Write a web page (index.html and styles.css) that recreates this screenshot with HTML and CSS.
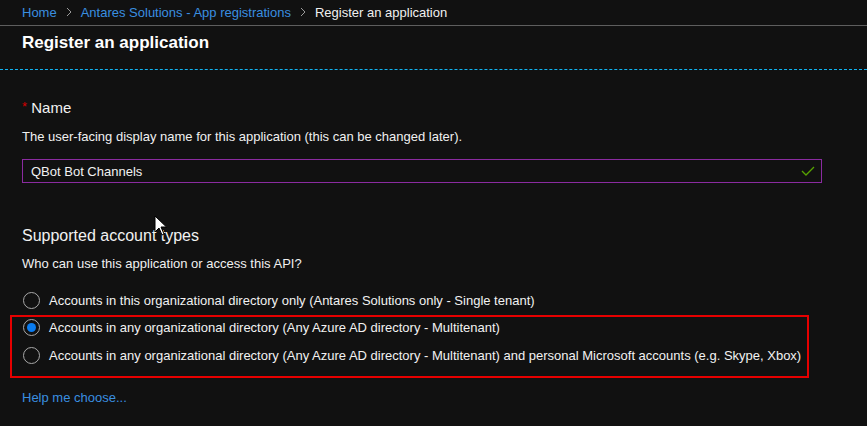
FILE: index.html
```html
<!DOCTYPE html>
<html>
<head>
<meta charset="utf-8">
<link rel="stylesheet" href="styles.css">
</head>
<body>
<div class="page">
  <nav class="crumbs">
    <a class="link">Home</a>
    <span class="chev"><svg width="8" height="10" viewBox="0 0 8 10"><path d="M2 1 L6 5 L2 9" fill="none" stroke="#9a9a9a" stroke-width="1"/></svg></span>
    <a class="link">Antares Solutions - App registrations</a>
    <span class="chev"><svg width="8" height="10" viewBox="0 0 8 10"><path d="M2 1 L6 5 L2 9" fill="none" stroke="#9a9a9a" stroke-width="1"/></svg></span>
    <span class="current">Register an application</span>
  </nav>
  <header class="titlebar">
    <h1 class="title">Register an application</h1>
  </header>
  <div class="dash"></div>
  <main class="content">
    <h2 class="label"><span class="req">*</span> Name</h2>
    <p class="desc">The user-facing display name for this application (this can be changed later).</p>
    <div class="input">
      <span class="value">QBot Bot Channels</span>
      <svg class="check" width="14" height="10" viewBox="0 0 14 10"><path d="M1 5 L5 9 L13 1" fill="none" stroke="#57a300" stroke-width="1.3"/></svg>
    </div>
    <h2 class="section">Supported account types</h2>
    <p class="desc q">Who can use this application or access this API?</p>
    <div class="radios">
      <div class="row"><span class="radio"></span><span>Accounts in this organizational directory only (Antares Solutions only - Single tenant)</span></div>
      <div class="hl">
        <div class="row"><span class="radio on"></span><span>Accounts in any organizational directory (Any Azure AD directory - Multitenant)</span></div>
        <div class="row"><span class="radio"></span><span>Accounts in any organizational directory (Any Azure AD directory - Multitenant) and personal Microsoft accounts (e.g. Skype, Xbox)</span></div>
      </div>
    </div>
    <a class="link help">Help me choose...</a>
  </main>
  <svg class="cursor" width="14" height="22" viewBox="0 0 14 22"><path d="M1 1 L1 17 L5 13 L8 20 L10 19 L7 12 L12.5 12 Z" fill="#fff" stroke="#000" stroke-width="1"/></svg>
</div>
</body>
</html>
```
FILE: styles.css
```css
* { box-sizing: border-box; }
html, body { margin: 0; padding: 0; background: #111111; }
body { font-family: "Liberation Sans", Arial, sans-serif; color: #f2f2f2; font-size: 13px; }
.page { position: relative; width: 867px; height: 426px; overflow: hidden; }
.crumbs { height: 26px; border-bottom: 1px solid #5e5e5e; display: flex; align-items: center; padding-left: 22px; gap: 8px; font-size: 13px; padding-bottom: 1px; }
.link { color: #3a8fe0; text-decoration: none; }
.chev { display: flex; align-items: center; }
.current { color: #f0f0f0; }
.titlebar { height: 43px; padding-left: 22px; padding-top: 7px; }
.title { margin: 0; font-size: 17px; font-weight: bold; color: #ffffff; line-height: 20px; }
.dash { height: 0; border-top: 1px dashed #12b4f2; }
.content { padding-left: 22px; display: flex; flex-direction: column; align-items: flex-start; }
.label { margin: 28px 0 0; font-size: 15px; font-weight: normal; line-height: 18px; color: #f2f2f2; }
.req { color: #d40000; font-size: 13px; vertical-align: 2px; }
.desc { margin: 12px 0 0; line-height: 16px; color: #f0f0f0; }
.input { margin-top: 14px; width: 800px; height: 24px; border: 1px solid #8b2ba0; display: flex; align-items: center; justify-content: space-between; padding: 0 6px 0 8px; }
.value { color: #f2f2f2; }
.check { display: block; }
.section { margin: 43px 0 0; font-size: 16px; font-weight: normal; line-height: 20px; color: #f2f2f2; }
.q { margin-top: 10px; }
.radios { margin-top: 18px; display: flex; flex-direction: column; margin-left: -12px; }
.row { height: 20px; display: flex; align-items: center; gap: 9px; padding-left: 13px; }
.hl { border: 2px solid #e60000; width: 799px; margin-top: 5px; padding: 0 0 11px; display: flex; flex-direction: column; gap: 8px; }
.hl .row { padding-left: 11px; }
.radio { width: 17px; height: 17px; border: 1px solid #a8a8a8; border-radius: 50%; display: flex; align-items: center; justify-content: center; flex: none; }
.radio.on::after { content: ""; width: 9px; height: 9px; border-radius: 50%; background: #0a7cf0; }
.help { margin-top: 12px; }
.cursor { position: absolute; left: 154px; top: 215px; }
```
